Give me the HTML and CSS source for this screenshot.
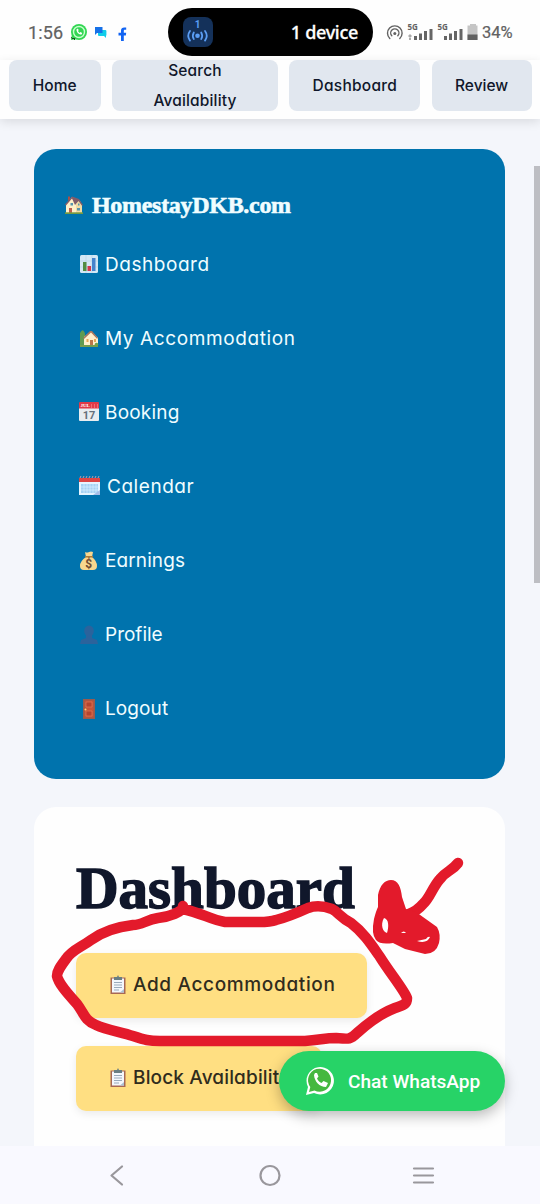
FILE: index.html
```html
<!DOCTYPE html>
<html lang="en">
<head>
<meta charset="utf-8">
<title>HomestayDKB.com</title>
<link rel="stylesheet" href="styles.css">
</head>
<body>
<div class="screen">
  <header class="status">
    <div class="status-left">
      <span class="clock">1:56</span>
      <svg class="s-wa" viewBox="0 0 18 18"><circle cx="9" cy="9" r="8" fill="#32d653"/><path d="M1 17l1-6 5 5z" fill="#32d653"/><circle cx="9" cy="9" r="5.5" fill="none" stroke="#c8ffce" stroke-width="1.4"/><path d="M6.4 6.4c.2 3 2.4 5.2 5.2 5.2l.6-1.7-1.8-.8-.8.8-1.7-1.8.8-.8-.8-1.8z" fill="#fff"/><path d="M1 14h1v1h3v2H4v-1H2z" fill="#174c20"/></svg>
      <svg class="s-chat" viewBox="0 0 13 12"><rect x="4" y="4" width="8.4" height="6" rx="1" fill="#10cdea"/><path d="M9 9h3v3z" fill="#10cdea"/><path d="M1 1h7.5v6H3L1 9z" fill="#1671e8"/></svg>
      <svg class="s-fb" viewBox="0 0 9 14"><path d="M3 14V8.4H.5V5.7H3V3.8C3 1.4 4.3.4 6.2.4h2v2.4H6.9c-.9 0-1.1.5-1.1 1.2v1.7h2.4l-.4 2.7h-2V14z" fill="#1264f3"/></svg>
    </div>
    <div class="island">
      <svg class="hotspot" viewBox="0 0 30 30"><rect width="30" height="30" rx="8" fill="#14315a"/><text x="14.5" y="11" text-anchor="middle" class="hot-n">1</text><g fill="none" stroke="#5b9ef5" stroke-width="1.8" stroke-linecap="round"><path d="M10.8 15.5q-2 3.3 0 6.600M18.200 15.500q2 3.300 0 6.600M7 14q-3.500 4.800 0 9.600M22 14q3.500 4.800 0 9.600"/></g><circle cx="14.500" cy="18.800" r="2.300" fill="#5b9ef5"/></svg>
      <span class="device">1 device</span>
    </div>
    <div class="status-right">
      <svg class="s-icons" viewBox="0 -4 92 28">
        <g fill="none" stroke="#626262" stroke-width="1.4" stroke-linecap="round"><path d="M3.800 16.500a7.300 7.300 0 1 1 10 0M5.800 13.800a4.100 4.100 0 1 1 6 0"/></g><circle cx="8.800" cy="11.600" r="1.500" fill="#626262"/>
        <text x="21.500" y="7.500" class="net">5G</text><text x="51.500" y="7.500" class="net">5G</text>
        <path d="M22 14l2-2 2 2-2 2zM23 16h2v2h-2z" fill="#aaa"/>
        <g fill="#666"><rect x="28" y="14" width="3" height="4"/><rect x="33" y="11.500" width="3" height="6.500"/><rect x="38" y="9" width="3" height="9"/><rect x="43.500" y="7" width="3" height="11"/><rect x="58" y="14" width="3" height="4"/><rect x="63" y="11.500" width="3" height="6.500"/><rect x="68" y="9" width="3" height="9"/><rect x="73.500" y="7" width="3" height="11"/></g>
        <path d="M84 2h6v1.500h1.500V18h-10V3.500H84z" fill="#c5c5c5"/><rect x="81.500" y="12.500" width="10" height="5.500" fill="#626262"/>
      </svg>
      <span class="pct">34%</span>
    </div>
  </header>
  <nav class="nav">
    <a class="tab tab-home">Home</a>
    <a class="tab tab-search">Search<br>Availability</a>
    <a class="tab tab-dash">Dashboard</a>
    <a class="tab tab-review">Review</a>
  </nav>
  <main class="content">
    <section class="sidebar">
      <div class="brand">
        <svg viewBox="0 0 20 20"><path d="M2 9L8 2l8 4 2 5v7H2z" fill="#fff0c9"/><path d="M12 9l3-4 3 5v8h-6z" fill="#f3dba4"/><path d="M1 9.500L8 1.500l7 2.500 4 6-1 .8L14.500 6 11 10 8 3.500 2 10.500z" fill="#805b69"/><path d="M4 1.500h2V4L4 6z" fill="#a85048"/><path d="M5 13h3v5H5z" fill="#bd5d4d"/><path d="M6.500 8h2.500v2.500H6.500zM14 8.500h1.500v2H14zM13 13h3v2.500h-3z" fill="#5794ac"/><path d="M1 17.300h18V19H1z" fill="#759a42"/></svg>
        <span class="brand-name">HomestayDKB.com</span>
      </div>
      <a class="item"><svg viewBox="0 0 20 20"><rect x="1" y="1" width="18" height="18" rx="1.500" fill="#d4e8f5"/><path d="M1 7h18M1 13h18M7 1v18M13 1v18" stroke="#b5d2e6" stroke-width=".6"/><path d="M4 8h3.500v9H4z" fill="#528c43"/><path d="M8.500 12H12v5H8.500z" fill="#d3364c"/><path d="M13 4h3.500v13H13z" fill="#4583cc"/></svg><span class="t-dash">Dashboard</span></a>
      <a class="item"><svg viewBox="0 0 20 20"><path d="M1 5q3-6 5 1v12H1z" fill="#609b51"/><path d="M5 9l7-6 7 7v8H5z" fill="#fff0cd"/><path d="M4 10l7-7h2l6 7-1 .7L12 4.500 5 11z" fill="#a9775d"/><path d="M7.500 11h2v3h-2zM15 11h2v3h-2z" fill="#eaa857"/><path d="M11 12h3v6h-3z" fill="#ba754b"/><path d="M1 17h18v2H1z" fill="#789e4d"/><circle cx="17.500" cy="16.500" r="1.800" fill="#73a34c"/></svg><span class="t-acc">My Accommodation</span></a>
      <a class="item"><svg viewBox="0 0 20 20"><path d="M0 6h20v12q0 1-1 1H1q-1 0-1-1z" fill="#e8edf0"/><path d="M0 1q0-1 1-1h18q1 0 1 1v5.500H0z" fill="#e13a49"/><text x="1.500" y="5.300" class="cal-m">JUL</text><path d="M12 3h1m2 0h1m2 0h1M12 5h1m2 0h1m2 0h1" stroke="#ff9da0"/><text x="10" y="16.800" text-anchor="middle" class="cal-d">17</text></svg><span class="t-book">Booking</span></a>
      <a class="item item-cal"><svg viewBox="0 0 21 20"><path d="M0 2h21v17H0z" fill="#e5f4ff"/><path d="M0 2h21v4H0z" fill="#dc4543"/><path d="M1 2l1-2M4 2l1-2M7 2l1-2M10 2l1-2M13 2l1-2M16 2l1-2M19 2l1-2" stroke="#bd9eab"/><path d="M2 8h17v9H2z" fill="#a6d2f3"/><path d="M2 11h17M2 14h17M5 8v9M8 8v9M11 8v9M14 8v9M17 8v9" stroke="#d9f0ff" stroke-width=".7"/><path d="M14 19l7-5v5z" fill="#a6bde6"/></svg><span class="t-cal">Calendar</span></a>
      <a class="item"><svg viewBox="0 0 20 20"><path d="M6 1q2 1 4 0t4 0l-1 5q5 4 5 9 0 4-4 4H5q-4 0-4-4 0-5 6-9z" fill="#f8d78e"/><path d="M6 5h8v1.500H6z" fill="#a97b3b"/><text x="9.800" y="16.500" text-anchor="middle" class="money">$</text></svg><span class="t-earn">Earnings</span></a>
      <a class="item"><svg viewBox="0 0 20 20"><ellipse cx="10" cy="6" rx="4.800" ry="5.500" fill="#2b639c"/><path d="M7 10h6v3l5 2 1 4H1l1-4 5-2z" fill="#2b639c"/></svg><span class="t-prof">Profile</span></a>
      <a class="item"><svg viewBox="0 0 20 20"><path d="M4 0h12v20H4z" fill="#985b4f"/><path d="M5.500 1.500h9v17h-9z" fill="#c65439"/><path d="M7 3h6v5H7zM7 12h6v5H7z" fill="#b44430" stroke="#e07956" stroke-width=".7"/><circle cx="6.500" cy="10.500" r="1" fill="#ffd675"/></svg><span class="t-out">Logout</span></a>
    </section>
    <section class="panel">
      <h1>Dashboard</h1>
      <a class="action add"><svg viewBox="0 0 16 20"><path d="M.5 2.500h15V19H.5z" fill="#a86854"/><path d="M2 3.500h12v14H2z" fill="#f4f7fc"/><path d="M4 2h3l1-2 1 2h3v3H4z" fill="#697e83"/><path d="M4 7.500h8M4 10h8M4 12.500h8M4 15h5" stroke="#9aabbc"/><path d="M14 14v3.500h-4z" fill="#abc1d4"/></svg><span>Add Accommodation</span></a>
      <a class="action block"><svg viewBox="0 0 16 20"><path d="M.5 2.500h15V19H.5z" fill="#a86854"/><path d="M2 3.500h12v14H2z" fill="#f4f7fc"/><path d="M4 2h3l1-2 1 2h3v3H4z" fill="#697e83"/><path d="M4 7.500h8M4 10h8M4 12.500h8M4 15h5" stroke="#9aabbc"/><path d="M14 14v3.500h-4z" fill="#abc1d4"/></svg><span>Block Availability</span></a>
    </section>
  </main>
  <footer class="sysnav">
    <svg viewBox="0 0 540 58" fill="none" stroke="#99979c" stroke-width="2.200" stroke-linecap="round" stroke-linejoin="round"><path d="M122 20.500L111.500 29.500L122 38.500"/><circle cx="270" cy="29.500" r="9.500"/><path d="M414 22.500h19M414 29.500h19M414 36.500h19"/></svg>
  </footer>
  <div class="scrollbar"></div>
  <svg class="marks" viewBox="0 0 540 1204">
    <path d="M183 906C184 912 168 917 158 918C146 920 142 925 133 925C116 927 102 932 91 940C80 948 72 950 66 959C60 967 57 971 57 976C59 985 70 996 77 1004C84 1013 84 1020 96 1025C107 1030 121 1032 133 1036C145 1040 149 1041 160 1041H305C320 1040 325 1038 336 1038C348 1039 350 1040 357 1033C367 1024 382 1013 395 1008C403 1005 407 1005 407 998C404 990 390 973 380 957C371 944 363 932 351 923C341 918 338 912 332 909C324 906 316 905 308 908C297 913 288 917 276 920C268 923 259 922 251 922H225C211 920 202 913 183 909" fill="none" stroke="#e31a2b" stroke-width="10.500" stroke-linecap="round" stroke-linejoin="round"/>
    <path d="M458 863C452 871 446 871 440 879C432 888 430 898 423 904Q417 911 409 914" fill="none" stroke="#e31a2b" stroke-width="10.500" stroke-linecap="round" stroke-linejoin="round"/>
    <path fill-rule="evenodd" fill="#e31a2b" d="M378 895C380 885 385 880 391 880C398 880 401 887 402 897L406 909L416 912L437 927Q441 934 439 943Q436 954 425 954L405 949L393 943Q380 945 376 940Q371 934 374 919Q376 911 378 907ZM384 918C380 925 383 932 387 933C389 927 389 919 384 918ZM417 941Q427 944 430 937Q428 936 426 939ZM401 933Q404 930 406 933Z"/>
  </svg>
  <a class="chat"><svg viewBox="0 0 28 28"><path d="M0 28l2-8A13.700 13.700 0 1 1 8 26z" fill="#fff"/><path d="M3 25l1.300-5A11.500 11.500 0 1 1 8.500 23.500z" fill="#45b83f"/><path d="M8 8c.5 6.500 5.500 12 12 12l2-4-4.500-2-2 2c-2-1-3.500-2.500-4.500-4.500l1.500-2L11 6H9z" fill="#fff"/></svg><span>Chat WhatsApp</span></a>
</div>
</body>
</html>
```
FILE: styles.css
```css
* { box-sizing: border-box; }
body { margin: 0; }
svg { display: block; flex: none; }
.screen {
  position: relative; display: flex; flex-direction: column;
  width: 540px; height: 1204px; overflow: hidden;
  background: #f4f6fb;
  font-family: Inter, "Open Sans", sans-serif;
  font-feature-settings: "cv11";
}
.status {
  display: grid; grid-template-columns: 168px 205px 1fr;
  height: 60px; padding-top: 8px; background: #fefefe; flex: none;
  font-family: Roboto, sans-serif; color: #626262;
}
.status-left, .status-right { display: flex; align-items: center; }
.status-left { padding-left: 28px; height: 48px; }
.clock { width: 42px; font-size: 18px; letter-spacing: .15px; -webkit-text-stroke: .2px; }
.s-wa { width: 18px; height: 18px; }
.s-chat { width: 13px; height: 12px; margin-left: 6px; }
.s-fb { width: 9px; height: 14px; margin-left: 11px; margin-top: 3px; }
.island {
  display: flex; align-items: center; justify-content: space-between;
  height: 48px; padding: 0 15px; border-radius: 24px; background: #000;
}
.hotspot { width: 30px; height: 30px; }
.hot-n { font: bold 10px Roboto, sans-serif; fill: #5b9ef5; }
.device { color: #fff; font: 500 18px "Noto Sans", sans-serif; letter-spacing: -.3px; -webkit-text-stroke: .3px #fff; }
.status-right { padding-left: 13px; height: 48px; }
.s-icons { width: 92px; height: 28px; }
.net { font: bold 8px "Open Sans", sans-serif; fill: #626262; }
.pct { margin-left: 4px; font-size: 16.500px; -webkit-text-stroke: .2px; }
.nav {
  display: grid; grid-template-columns: 92px 166px 131px 100px; column-gap: 11.300px;
  height: 59px; padding-left: 8.700px; flex: none; background: #fefefe;
  box-shadow: 0 3px 10px #0000001c; z-index: 1;
}
.tab {
  display: flex; align-items: center; justify-content: center; text-align: center;
  height: 51px; border-radius: 8px; background: #e1e7ef; color: #10172b;
  font-size: 15.500px; font-weight: 500; line-height: 30px;
}
.tab-search { letter-spacing: .15px; }
.tab-dash { letter-spacing: .25px; }
.content { flex: 1; min-height: 0; padding: 30px 35px 0 34px; overflow: hidden; }
.sidebar { height: 630px; padding: 34px 30px; border-radius: 22px; background: #0073ad; color: #f0fdff; }
.brand { display: flex; align-items: center; height: 44px; }
.brand svg { width: 20px; height: 20px; margin-right: 8px; }
.brand-name { font: bold 24px "Liberation Serif", serif; letter-spacing: -.3px; -webkit-text-stroke: .6px #f0fdff; }
.item { display: flex; align-items: center; height: 74.150px; padding-left: 15px; font-size: 19px; }
.item svg { width: 20px; height: 20px; margin-right: 6px; }
.item-cal svg { width: 21px; margin-right: 7px; }
.t-dash { letter-spacing: .55px; }
.t-acc { letter-spacing: .6px; }
.t-book { letter-spacing: .2px; }
.t-cal { letter-spacing: .55px; }
.t-earn { letter-spacing: .1px; }
.t-out { letter-spacing: .1px; }
.cal-m { font: bold 5px "Liberation Serif", serif; fill: #fff; }
.cal-d { font: bold 11px Roboto, sans-serif; fill: #66717b; }
.money { font: bold 12px Roboto, sans-serif; fill: #6f4b33; }
.panel { height: 400px; margin-top: 28px; padding: 42px; border-radius: 22px 22px 0 0; background: #fefefe; }
h1 {
  margin: 0; height: 104px; font: bold 59px/79px "Liberation Serif", serif;
  letter-spacing: 0; color: #10172b; -webkit-text-stroke: 1.500px #10172b;
}
.action {
  display: flex; align-items: center; height: 65px; padding: 0 0 2px 34px; margin-bottom: 28px;
  border-radius: 10px; background: #ffdf82; color: #302c1d;
  font-size: 19px; font-weight: 500; white-space: nowrap; box-shadow: 0 3px 8px #00000014;
}
.action svg { width: 16px; height: 20px; margin-right: 7px; }
.add { width: 291px; letter-spacing: .65px; }
.block { width: 246px; letter-spacing: .15px; }
.sysnav { height: 58px; flex: none; background: #f9f9ff; z-index: 1; }
.sysnav svg { width: 540px; height: 58px; }
.scrollbar { position: absolute; right: 0; top: 166px; width: 6px; height: 417px; background: #bdbec3; }
.marks { position: absolute; inset: 0; width: 540px; height: 1204px; z-index: 2; }
.chat {
  position: absolute; left: 279px; top: 1051px; z-index: 3;
  display: flex; align-items: center; width: 226px; height: 60px; padding-left: 27px;
  border-radius: 30px; background: #27d367; color: #fff;
  font: 500 19.100px Roboto, sans-serif; box-shadow: 0 5px 14px #00000045;
}
.chat svg { width: 28px; height: 28px; margin-right: 14px; }
```
